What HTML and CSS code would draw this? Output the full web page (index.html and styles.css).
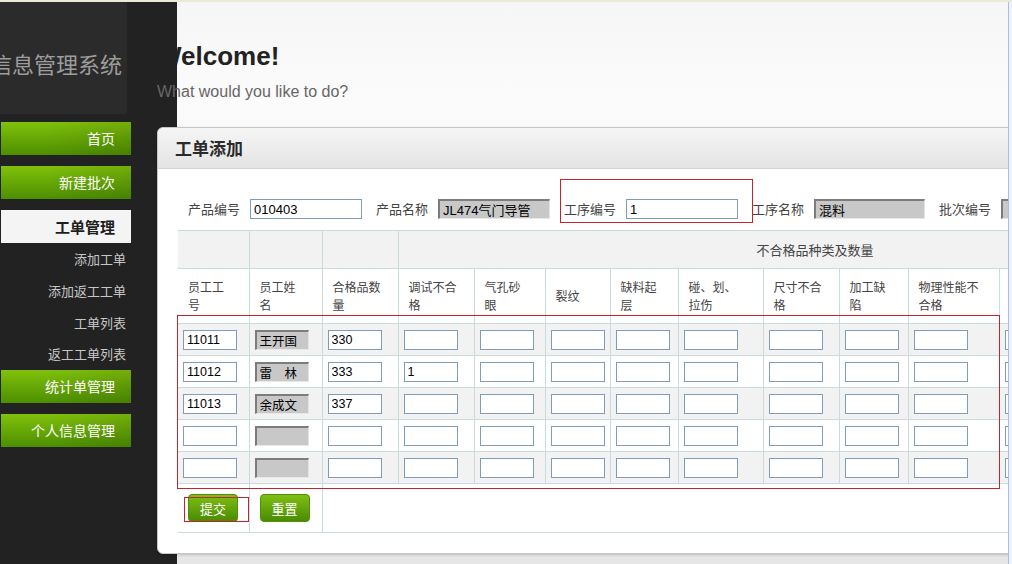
FILE: index.html
```html
<!DOCTYPE html>
<html lang="zh-CN">
<head>
<meta charset="utf-8">
<title>工单添加</title>
<link rel="stylesheet" href="styles.css">
</head>
<body>
<div class="topbar"></div>
<div class="layout">
  <aside class="side">
    <div class="side-head"><span class="brand">信息管理系统</span></div>
    <nav class="nav">
      <a class="nav-btn">首页</a>
      <a class="nav-btn">新建批次</a>
      <a class="nav-cur">工单管理</a>
      <ul class="sub">
        <li>添加工单</li>
        <li>添加返工工单</li>
        <li>工单列表</li>
        <li>返工工单列表</li>
      </ul>
      <a class="nav-btn">统计单管理</a>
      <a class="nav-btn">个人信息管理</a>
    </nav>
  </aside>
  <main class="main">
    <div class="inner">
      <h1 class="title">Welcome!</h1>
      <p class="lead">What would you like to do?</p>
      <section class="card">
        <div class="card-head">工单添加</div>
        <div class="card-body">
          <div class="form-row">
            <div class="field"><label>产品编号</label><input class="txt" value="010403"></div>
            <div class="field"><label>产品名称</label><input class="txt ro" value="JL474气门导管" readonly></div>
            <div class="field"><label>工序编号</label><input class="txt" value="1"></div>
            <div class="field"><label>工序名称</label><input class="txt ro w111" value="混料" readonly></div>
            <div class="field"><label>批次编号</label><input class="txt ro" value="" readonly></div>
          </div>
          <table class="grid">
            <colgroup>
              <col class="c71"><col class="c73"><col class="c76"><col class="c76"><col class="c71"><col class="c65"><col class="c68"><col class="c85"><col class="c76"><col class="c69"><col class="c91"><col class="c79"><col class="c77"><col class="c77">
            </colgroup>
            <tr class="h1">
              <th></th><th></th><th></th>
              <th colspan="11" class="group">不合格品种类及数量</th>
            </tr>
            <tr class="h2">
              <th>员工工号</th><th>员工姓名</th><th>合格品数量</th><th>调试不合格</th><th>气孔砂眼</th><th>裂纹</th><th>缺料起层</th><th>碰、划、拉伤</th><th>尺寸不合格</th><th>加工缺陷</th><th>物理性能不合格</th><th></th><th></th><th></th>
            </tr>
            <tr class="row alt">
              <td><input class="cell" value="11011"></td><td><input class="cell ro" value="王开国" readonly></td><td><input class="cell" value="330"></td>
              <td><input class="cell"></td><td><input class="cell"></td><td><input class="cell"></td><td><input class="cell"></td><td><input class="cell"></td><td><input class="cell"></td><td><input class="cell"></td><td><input class="cell"></td><td><input class="cell"></td><td><input class="cell"></td><td><input class="cell"></td>
            </tr>
            <tr class="row">
              <td><input class="cell" value="11012"></td><td><input class="cell ro" value="雷　林" readonly></td><td><input class="cell" value="333"></td>
              <td><input class="cell" value="1"></td><td><input class="cell"></td><td><input class="cell"></td><td><input class="cell"></td><td><input class="cell"></td><td><input class="cell"></td><td><input class="cell"></td><td><input class="cell"></td><td><input class="cell"></td><td><input class="cell"></td><td><input class="cell"></td>
            </tr>
            <tr class="row alt">
              <td><input class="cell" value="11013"></td><td><input class="cell ro" value="余成文" readonly></td><td><input class="cell" value="337"></td>
              <td><input class="cell"></td><td><input class="cell"></td><td><input class="cell"></td><td><input class="cell"></td><td><input class="cell"></td><td><input class="cell"></td><td><input class="cell"></td><td><input class="cell"></td><td><input class="cell"></td><td><input class="cell"></td><td><input class="cell"></td>
            </tr>
            <tr class="row">
              <td><input class="cell"></td><td><input class="cell ro" readonly></td><td><input class="cell"></td>
              <td><input class="cell"></td><td><input class="cell"></td><td><input class="cell"></td><td><input class="cell"></td><td><input class="cell"></td><td><input class="cell"></td><td><input class="cell"></td><td><input class="cell"></td><td><input class="cell"></td><td><input class="cell"></td><td><input class="cell"></td>
            </tr>
            <tr class="row alt">
              <td><input class="cell"></td><td><input class="cell ro" readonly></td><td><input class="cell"></td>
              <td><input class="cell"></td><td><input class="cell"></td><td><input class="cell"></td><td><input class="cell"></td><td><input class="cell"></td><td><input class="cell"></td><td><input class="cell"></td><td><input class="cell"></td><td><input class="cell"></td><td><input class="cell"></td><td><input class="cell"></td>
            </tr>
            <tr class="btn-row">
              <td><button class="btn" type="button">提交</button></td>
              <td><button class="btn" type="button">重置</button></td>
              <td colspan="12"></td>
            </tr>
          </table>
        </div>
        <div class="mark mark-step"></div>
        <div class="mark mark-rows"></div>
        <div class="mark mark-submit"></div>
      </section>
    </div>
  </main>
</div>
<div class="vscroll"></div>
</body>
</html>
```

FILE: styles.css
```css
* { box-sizing: border-box; }
html, body { margin: 0; }
body {
  width: 1012px;
  height: 564px;
  overflow: hidden;
  position: relative;
  background: #232323;
  font-family: "Liberation Sans", "Noto Sans CJK SC", sans-serif;
}
.topbar { height: 2px; background: #ece9d8; }
.layout { display: flex; height: 562px; }

/* sidebar */
.side { width: 177px; flex: none; background: #222222; }
.side-head {
  width: 127px;
  height: 112px;
  padding-top: 48px;
  background: #2b2b2b;
  overflow: hidden;
}
.brand {
  display: block;
  margin-left: -10px;
  font-family: "Noto Sans CJK SC", sans-serif;
  font-size: 22px;
  line-height: 26px;
  color: #9d9d9d;
  white-space: nowrap;
}
.nav { width: 131px; padding-top: 8px; }
.nav-btn, .nav-cur {
  display: block;
  margin-left: 1px;
  height: 33px;
  line-height: 33px;
  padding-right: 16px;
  text-align: right;
  font-family: "Noto Sans CJK SC", sans-serif;
  font-size: 14px;
  color: #ffffff;
  margin-bottom: 11px;
}
.nav-btn {
  background:
    linear-gradient(to right, rgba(0,0,0,0) 35%, rgba(0,0,0,0.10)),
    linear-gradient(#80c10b, #4d8f01);
}
.nav-cur {
  background: #f4f4f4;
  color: #1e1e1e;
  font-weight: bold;
  font-size: 15px;
  margin-bottom: 0;
}
.sub { list-style: none; margin: 0 0 0 1px; padding: 0; }
.sub li {
  height: 31.75px;
  line-height: 31.75px;
  padding-right: 5px;
  text-align: right;
  font-family: "Noto Sans CJK SC", sans-serif;
  font-size: 13px;
  color: #c6c6c6;
}

/* main */
.main {
  flex: 1;
  min-width: 0;
  background: linear-gradient(180deg, #f6f6f6 0%, #fbfbfb 18%, #f2f2f2 60%, #e6e6e6 100%);
}
.inner { margin-left: -20px; padding-top: 39px; }
.title {
  margin: 0;
  font-size: 26px;
  line-height: 30px;
  font-weight: bold;
  color: #222222;
}
.lead {
  margin: 11px 0 0;
  font-size: 16px;
  line-height: 20px;
  color: #666666;
}
.card {
  position: relative;
  margin-top: 25px;
  width: 1100px;
  background: #ffffff;
  border: 1px solid #c6c6c6;
  border-radius: 6px 0 0 6px;
  box-shadow: 0 1px 3px rgba(0,0,0,0.18);
}
.card-head {
  height: 41px;
  line-height: 40px;
  padding-left: 17px;
  border-bottom: 1px solid #d3d3d3;
  border-radius: 6px 0 0 0;
  background: linear-gradient(#f5f5f5, #e4e4e4);
  font-family: "Noto Sans CJK SC", sans-serif;
  font-weight: bold;
  font-size: 17px;
  color: #2a2a2a;
}
.card-body { padding: 0 0 20px 20px; }
.form-row { display: flex; align-items: center; padding: 30px 0 11px 10px; }
.field { display: flex; align-items: center; flex: none; margin-right: 14px; }
.field label {
  margin-right: 10px;
  font-family: "Noto Sans CJK SC", sans-serif;
  font-size: 13px;
  line-height: 20px;
  color: #444444;
}
.txt {
  width: 112px;
  height: 20px;
  padding: 0 3px;
  border: 1px solid #7f9db9;
  background: #ffffff;
  font-family: "Liberation Sans", "Noto Sans CJK SC", sans-serif;
  font-size: 13px;
  color: #000000;
  outline: none;
}
.w111 { width: 111px; }
.ro {
  background: #c8c8c8;
  border-top: 2px solid #7c7c7c;
  border-left: 2px solid #7c7c7c;
  border-right: 1px solid #e4e4e4;
  border-bottom: 1px solid #e8e8e8;
}

/* table */
.grid { border-collapse: collapse; table-layout: fixed; width: 1054px; }
.c71 { width: 71px; } .c73 { width: 73px; } .c76 { width: 76px; } .c65 { width: 65px; }
.c68 { width: 68px; } .c85 { width: 85px; } .c69 { width: 69px; } .c91 { width: 91px; }
.c79 { width: 79px; } .c77 { width: 77px; }
.grid th, .grid td { border: 1px solid #cadbdb; padding: 0; }
.grid tr > :first-child { border-left: none; }
.h1 { height: 38px; background: #f2f2f2; }
.h1 th { font-weight: normal; }
.group {
  text-align: center;
  font-family: "Noto Sans CJK SC", sans-serif;
  font-size: 13px;
  color: #444444;
}
.h2 { height: 55px; background: #ffffff; }
.h2 th {
  padding: 0 16px 0 10px;
  text-align: left;
  vertical-align: middle;
  font-family: "Noto Sans CJK SC", sans-serif;
  font-weight: normal;
  font-size: 12px;
  line-height: 18px;
  color: #444444;
}
.row { height: 32px; background: #ffffff; }
.row.alt { background: #f2f2f2; }
.row td { padding: 0 5px; vertical-align: middle; }
.cell {
  display: block;
  width: 54px;
  height: 20px;
  padding: 0 3px;
  border: 1px solid #7f9db9;
  background: #ffffff;
  font-family: "Liberation Sans", "Noto Sans CJK SC", sans-serif;
  font-size: 12.5px;
  color: #000000;
  outline: none;
}
.cell.ro {
  background: #c8c8c8;
  border-top: 2px solid #7c7c7c;
  border-left: 2px solid #7c7c7c;
  border-right: 1px solid #e4e4e4;
  border-bottom: 1px solid #e8e8e8;
}
.btn-row { height: 49px; background: #ffffff; }
.btn-row td { padding: 0 10px; vertical-align: middle; }
.btn {
  display: block;
  width: 50px;
  height: 28px;
  padding: 0;
  border: 1px solid #4f8f0a;
  border-radius: 4px;
  background: linear-gradient(#7fbf14, #4a8b03);
  font-family: "Noto Sans CJK SC", sans-serif;
  font-size: 13px;
  color: #ffffff;
}

/* annotation boxes */
.mark { position: absolute; border: 1px solid #c1262c; pointer-events: none; }
.mark-step { left: 402px; top: 51px; width: 193px; height: 44px; }
.mark-rows { left: 19px; top: 187px; width: 823px; height: 174px; }
.mark-submit { left: 26px; top: 369px; width: 65px; height: 25px; }

/* window scrollbar edge */
.vscroll {
  position: absolute;
  top: 2px;
  right: 0;
  bottom: 0;
  width: 4px;
  background: #edf2fc;
  border-left: 1px solid #a9bde8;
}
```
